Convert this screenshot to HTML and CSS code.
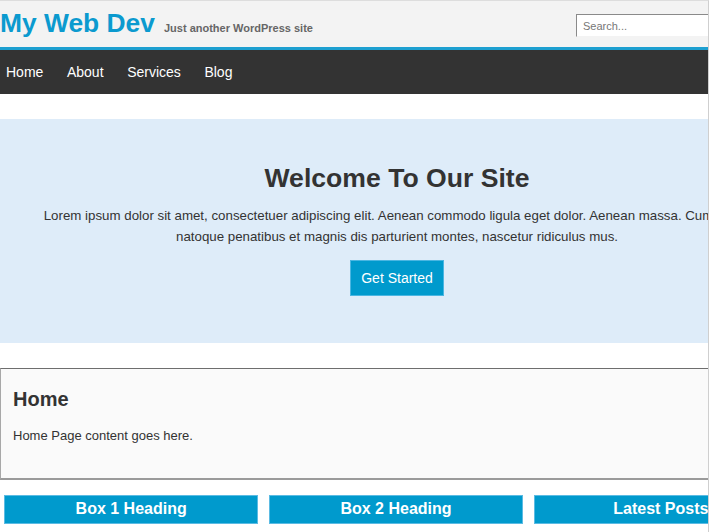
FILE: index.html
```html
<!DOCTYPE html>
<html lang="en">
<head>
<meta charset="utf-8">
<title>My Web Dev</title>
<link rel="stylesheet" href="styles.css">
</head>
<body>
<div class="frame"></div>
<div class="page">
  <header class="site-header">
    <div class="branding">
      <h1 class="site-title">My Web Dev</h1>
      <span class="tagline">Just another WordPress site</span>
    </div>
    <input class="search" type="text" placeholder="Search...">
  </header>
  <nav class="main-nav">
    <a href="#">Home</a>
    <a href="#">About</a>
    <a href="#">Services</a>
    <a href="#">Blog</a>
  </nav>
  <section class="hero">
    <h2>Welcome To Our Site</h2>
    <p>Lorem ipsum dolor sit amet, consectetuer adipiscing elit. Aenean commodo ligula eget dolor. Aenean massa. Cum sociis natoque penatibus et magnis dis parturient montes, nascetur ridiculus mus.</p>
    <a class="btn" href="#">Get Started</a>
  </section>
  <main class="content">
    <h3>Home</h3>
    <p>Home Page content goes here.</p>
  </main>
  <div class="boxes">
    <div class="box">Box 1 Heading</div>
    <div class="box">Box 2 Heading</div>
    <div class="box">Latest Posts</div>
  </div>
</div>
</body>
</html>
```
FILE: styles.css
```css
html, body {
  margin: 0;
  padding: 0;
  overflow: hidden;
  background: #fff;
}
body {
  font-family: "Liberation Sans", Arial, sans-serif;
  color: #333;
}
.frame {
  position: fixed;
  inset: 0;
  border-top: 1px solid #dddddd;
  border-right: 1px solid #cfcfcf;
  pointer-events: none;
  z-index: 10;
}
.page {
  width: 794px;
}
.site-header {
  height: 46px;
  margin-top: 1px;
  background: #f3f3f3;
  border-bottom: 3px solid #1d9fd0;
  display: flex;
  align-items: center;
  justify-content: space-between;
}
.branding {
  display: flex;
  align-items: baseline;
  gap: 9px;
  margin-top: -2px;
}
.site-title {
  margin: 0;
  font-size: 26.4px;
  line-height: 30px;
  font-weight: bold;
  color: #0b9acf;
}
.tagline {
  font-size: 11px;
  font-weight: bold;
  color: #666;
}
.search {
  width: 200px;
  height: 23px;
  box-sizing: border-box;
  margin: 3px 18px 0 0;
  padding: 0 6px;
  font-family: "Liberation Sans", Arial, sans-serif;
  font-size: 11px;
  color: #333;
  background: #fff;
  border: 1px solid #f3f3f3;
  border-top-color: #8a8a8a;
  border-left-color: #8a8a8a;
  outline: none;
}
.search::placeholder {
  color: #777;
}
.main-nav {
  height: 44px;
  background: #333;
  display: flex;
  align-items: center;
  gap: 11.6px;
}
.main-nav a {
  color: #fff;
  text-decoration: none;
  font-size: 14px;
  padding: 0 6px;
}
.hero {
  margin-top: 25px;
  height: 224px;
  box-sizing: border-box;
  background: #deecf9;
  text-align: center;
  padding-top: 44px;
}
.hero h2 {
  margin: 0;
  font-size: 26.6px;
  line-height: 30px;
  font-weight: bold;
  color: #333;
}
.hero p {
  margin: 12px auto 13px;
  max-width: 720px;
  font-size: 13.3px;
  line-height: 21px;
  color: #333;
}
.btn {
  display: inline-block;
  background: #009acd;
  border: 1px solid #4ab6e2;
  color: #fff;
  text-decoration: none;
  font-size: 14px;
  line-height: 34px;
  padding: 0 10px;
}
.content {
  display: block;
  margin-top: 25px;
  height: 112px;
  box-sizing: border-box;
  background: #fafafa;
  border: 1px solid #a8a8a8;
  border-top-color: #6e6e6e;
  border-bottom: 2px solid #9a9a9a;
  padding: 18px 12px;
}
.content h3 {
  margin: 0;
  font-size: 20px;
  line-height: 24px;
  font-weight: bold;
  color: #333;
}
.content p {
  margin: 17px 0 0;
  font-size: 13px;
  line-height: 16px;
  color: #333;
}
.boxes {
  display: flex;
  gap: 10.5px;
  padding: 0 6px 0 4px;
  margin-top: 15px;
}
.box {
  flex: 1;
  background: #009acd;
  border: 1px solid #5bbbe3;
  color: #fff;
  font-weight: bold;
  font-size: 16px;
  line-height: 25px;
  padding-bottom: 2px;
  text-align: center;
}
```
